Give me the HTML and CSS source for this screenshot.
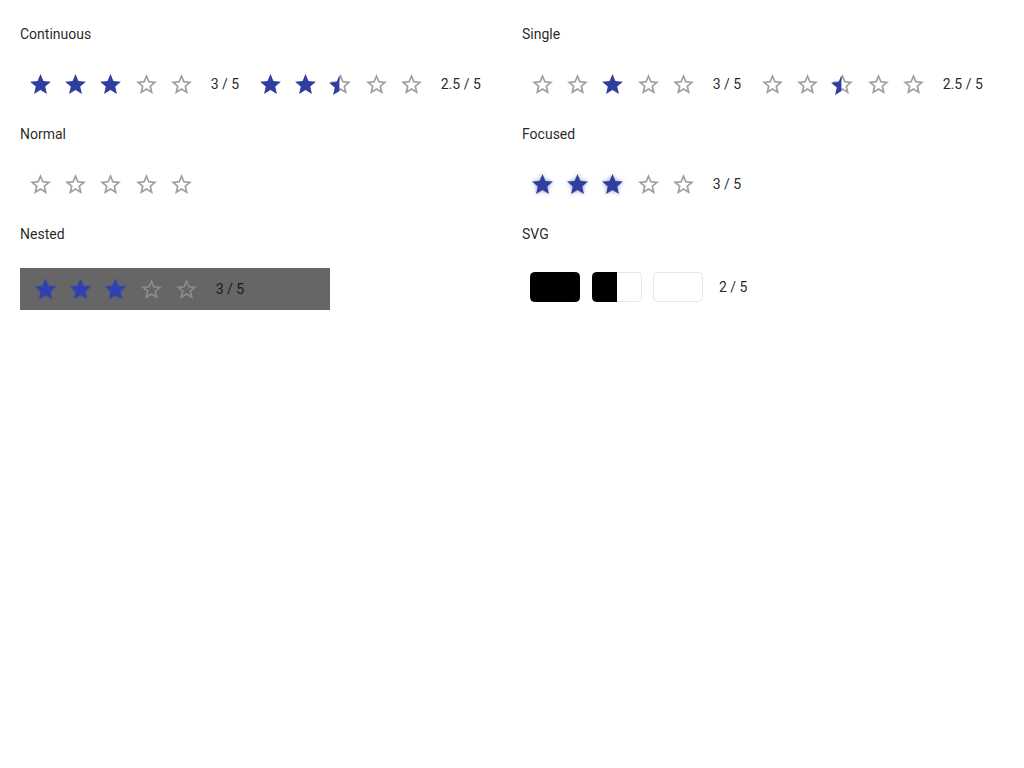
FILE: index.html
```html
<!DOCTYPE html>
<html>
<head>
<meta charset="utf-8">
<link rel="stylesheet" href="styles.css">
</head>
<body>
<svg class="defs" width="0" height="0" aria-hidden="true">
  <defs>
    <symbol id="star" viewBox="0 0 24 24"><path d="M12 17.27L18.18 21l-1.64-7.03L22 9.24l-7.19-.61L12 2 9.19 8.63 2 9.24l5.46 4.73L5.82 21z"/></symbol>
    <symbol id="star-border" viewBox="0 0 24 24"><path d="M22 9.24l-7.19-.62L12 2 9.19 8.63 2 9.24l5.46 4.73L5.82 21 12 17.27 18.18 21l-1.63-7.03L22 9.24zM12 15.4l-3.76 2.27 1-4.28-3.32-2.88 4.38-.38L12 6.1l1.71 4.04 4.38.38-3.32 2.88 1 4.28L12 15.4z"/></symbol>
  </defs>
</svg>
<main class="grid">
  <section class="sec">
    <div class="label">Continuous</div>
    <div class="row">
      <div class="rating">
        <svg class="st on"><use href="#star"/></svg>
        <svg class="st on"><use href="#star"/></svg>
        <svg class="st on"><use href="#star"/></svg>
        <svg class="st off"><use href="#star-border"/></svg>
        <svg class="st off"><use href="#star-border"/></svg>
        <span class="val">3 / 5</span>
      </div>
      <div class="rating">
        <svg class="st on"><use href="#star"/></svg>
        <svg class="st on"><use href="#star"/></svg>
        <span class="half"><svg class="st off"><use href="#star-border"/></svg><svg class="st on halffill"><use href="#star"/></svg></span>
        <svg class="st off"><use href="#star-border"/></svg>
        <svg class="st off"><use href="#star-border"/></svg>
        <span class="val">2.5 / 5</span>
      </div>
    </div>
  </section>
  <section class="sec">
    <div class="label">Single</div>
    <div class="row">
      <div class="rating">
        <svg class="st off"><use href="#star-border"/></svg>
        <svg class="st off"><use href="#star-border"/></svg>
        <svg class="st on"><use href="#star"/></svg>
        <svg class="st off"><use href="#star-border"/></svg>
        <svg class="st off"><use href="#star-border"/></svg>
        <span class="val">3 / 5</span>
      </div>
      <div class="rating">
        <svg class="st off"><use href="#star-border"/></svg>
        <svg class="st off"><use href="#star-border"/></svg>
        <span class="half"><svg class="st off"><use href="#star-border"/></svg><svg class="st on halffill"><use href="#star"/></svg></span>
        <svg class="st off"><use href="#star-border"/></svg>
        <svg class="st off"><use href="#star-border"/></svg>
        <span class="val">2.5 / 5</span>
      </div>
    </div>
  </section>
  <section class="sec">
    <div class="label">Normal</div>
    <div class="row">
      <div class="rating">
        <svg class="st off"><use href="#star-border"/></svg>
        <svg class="st off"><use href="#star-border"/></svg>
        <svg class="st off"><use href="#star-border"/></svg>
        <svg class="st off"><use href="#star-border"/></svg>
        <svg class="st off"><use href="#star-border"/></svg>
      </div>
    </div>
  </section>
  <section class="sec">
    <div class="label">Focused</div>
    <div class="row">
      <div class="rating focused">
        <svg class="st on"><use href="#star"/></svg>
        <svg class="st on"><use href="#star"/></svg>
        <svg class="st on"><use href="#star"/></svg>
        <svg class="st off"><use href="#star-border"/></svg>
        <svg class="st off"><use href="#star-border"/></svg>
        <span class="val">3 / 5</span>
      </div>
    </div>
  </section>
  <section class="sec">
    <div class="label">Nested</div>
    <div class="nested">
      <div class="rating">
        <svg class="st on"><use href="#star"/></svg>
        <svg class="st on"><use href="#star"/></svg>
        <svg class="st on"><use href="#star"/></svg>
        <svg class="st off"><use href="#star-border"/></svg>
        <svg class="st off"><use href="#star-border"/></svg>
        <span class="val">3 / 5</span>
      </div>
    </div>
  </section>
  <section class="sec">
    <div class="label">SVG</div>
    <div class="svgrow">
      <svg class="blk" viewBox="0 0 50 30"><rect x="0.5" y="0.5" width="49" height="29" rx="4" fill="#000" stroke="#000"/></svg>
      <svg class="blk" viewBox="0 0 50 30"><defs><clipPath id="lh"><rect x="0" y="0" width="25" height="30"/></clipPath></defs><rect x="0.5" y="0.5" width="49" height="29" rx="4" fill="#fff" stroke="#e6e6e6"/><rect x="0.5" y="0.5" width="49" height="29" rx="4" fill="#000" stroke="#000" clip-path="url(#lh)"/></svg>
      <svg class="blk" viewBox="0 0 50 30"><rect x="0.5" y="0.5" width="49" height="29" rx="4" fill="#fff" stroke="#e6e6e6"/></svg>
      <span class="val">2 / 5</span>
    </div>
  </section>
</main>
</body>
</html>
```

FILE: styles.css
```css
html, body {
  margin: 0;
  padding: 0;
  background: #fff;
}
body {
  font-family: Roboto, "Liberation Sans", sans-serif;
  font-size: 14px;
  color: rgba(0, 0, 0, 0.87);
}
.defs {
  position: absolute;
  width: 0;
  height: 0;
  overflow: hidden;
}
.grid {
  display: grid;
  grid-template-columns: 1fr 1fr;
  column-gap: 20px;
  padding: 24px 20px 0;
}
.sec {
  height: 100px;
}
.label {
  line-height: 20px;
  height: 20px;
}
.row {
  margin-top: 20px;
  height: 40px;
  display: flex;
  align-items: center;
}
.rating {
  display: flex;
  align-items: center;
  padding-left: 7.5px;
  gap: 10.4px;
  margin-right: 11px;
}
.st {
  width: 25px;
  height: 25px;
  flex: none;
  display: block;
}
.on { fill: #303f9f; }
.off { fill: #9e9e9e; }
.half {
  position: relative;
  width: 25px;
  height: 25px;
  display: block;
}
.halffill {
  position: absolute;
  left: -1px;
  top: 1.5px;
  clip-path: inset(0 52% 0 0);
}
.val {
  margin-left: 6.2px;
  line-height: 20px;
  white-space: nowrap;
}
.focused .on {
  filter: drop-shadow(0 0 2px rgba(48, 63, 159, 0.55));
}
.nested {
  margin-top: 24px;
  width: 310px;
  height: 42px;
  background: #666666;
  display: flex;
  align-items: center;
  padding-left: 5px;
  box-sizing: border-box;
}
.nested .on {
  fill: #3040b0;
  filter: drop-shadow(0 0 1px rgba(48, 63, 180, 0.6));
}
.nested .off {
  fill: #8c8c8c;
}
.nested .val {
  color: #1a1a1a;
}
.svgrow {
  margin-top: 28px;
  height: 30px;
  display: flex;
  align-items: center;
  padding-left: 8px;
  gap: 11.5px;
}
.blk {
  width: 50px;
  height: 30px;
  display: block;
  flex: none;
}
.svgrow .val {
  margin-left: 4.5px;
}
```
